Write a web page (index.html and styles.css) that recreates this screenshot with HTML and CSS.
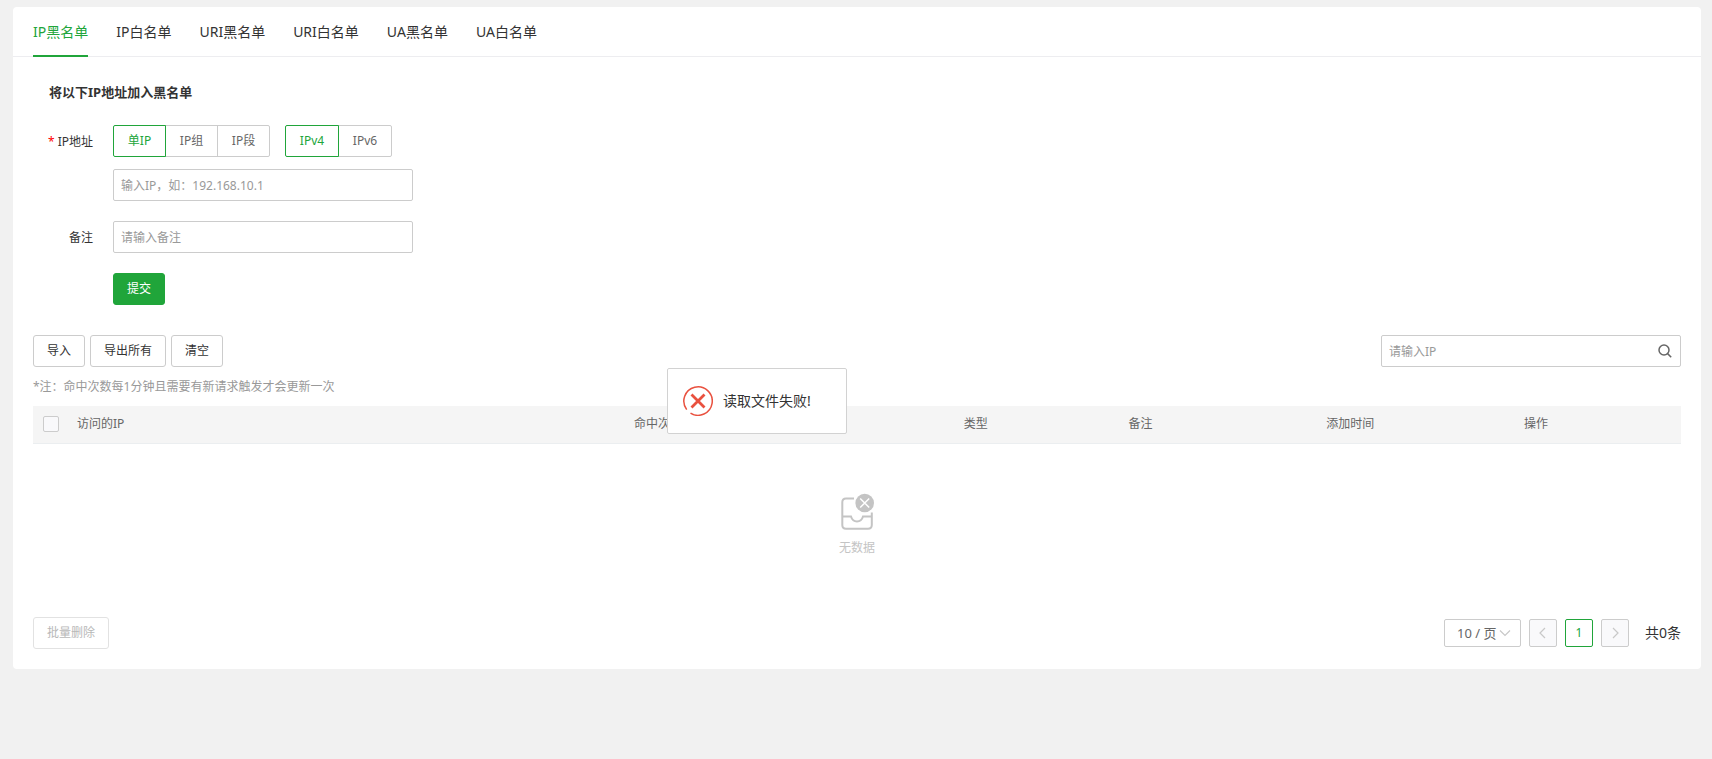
FILE: index.html
```html
<!DOCTYPE html>
<html lang="zh-CN">
<head>
	<meta charset="UTF-8">
	<meta name="viewport" content="width=device-width, initial-scale=1">
	<title>黑白名单</title>
	<link rel="stylesheet" href="styles.css">
</head>
<body>
<div class="card">
	<nav class="tabs">
		<a class="tab on" href="#">IP黑名单</a>
		<a class="tab" href="#">IP白名单</a>
		<a class="tab" href="#">URI黑名单</a>
		<a class="tab" href="#">URI白名单</a>
		<a class="tab" href="#">UA黑名单</a>
		<a class="tab" href="#">UA白名单</a>
	</nav>
	<div class="content">
		<form class="form">
			<h2 class="form-title">将以下IP地址加入黑名单</h2>
			<div class="form-item">
				<label class="form-label" for="ip"><span class="required">*</span> IP地址</label>
				<div class="form-main">
					<div class="radios">
						<div class="radio-group">
							<label class="radio"><input type="radio" name="ipType" checked><span>单IP</span></label>
							<label class="radio"><input type="radio" name="ipType"><span>IP组</span></label>
							<label class="radio"><input type="radio" name="ipType"><span>IP段</span></label>
						</div>
						<div class="radio-group ver">
							<label class="radio"><input type="radio" name="ipVer" checked><span>IPv4</span></label>
							<label class="radio"><input type="radio" name="ipVer"><span>IPv6</span></label>
						</div>
					</div>
					<input class="input" id="ip" type="text" placeholder="输入IP，如：192.168.10.1">
				</div>
			</div>
			<div class="form-item">
				<label class="form-label" for="remark">备注</label>
				<div class="form-main">
					<input class="input" id="remark" type="text" placeholder="请输入备注">
				</div>
			</div>
			<div class="form-submit">
				<button class="btn btn-primary" type="button">提交</button>
			</div>
		</form>

		<div class="toolbar">
			<div class="btns">
				<button class="btn" type="button">导入</button>
				<button class="btn" type="button">导出所有</button>
				<button class="btn" type="button">清空</button>
			</div>
			<div class="search">
				<input class="input" type="text" placeholder="请输入IP" aria-label="请输入IP">
				<button class="search-btn" type="button" aria-label="搜索">
					<svg width="14" height="14" viewBox="0 0 14 14" fill="none" stroke="#666" stroke-width="1.5">
						<circle cx="6" cy="6" r="5"/>
						<path d="M9.6 9.6L13.2 13.2"/>
					</svg>
				</button>
			</div>
		</div>
		<p class="note">*注：命中次数每1分钟且需要有新请求触发才会更新一次</p>

		<table class="table">
			<colgroup>
				<col class="col-check">
				<col class="col-ip">
				<col class="col-hit">
				<col class="col-type">
				<col class="col-remark">
				<col class="col-time">
				<col class="col-action">
			</colgroup>
			<thead>
				<tr>
					<th><input class="check" type="checkbox" aria-label="全选"></th>
					<th>访问的IP</th>
					<th>命中次数</th>
					<th>类型</th>
					<th>备注</th>
					<th>添加时间</th>
					<th>操作</th>
				</tr>
			</thead>
			<tbody>
				<tr>
					<td colspan="7">
						<div class="empty">
							<svg width="34" height="38" viewBox="0 0 34 38" fill="none" stroke="#c4c4c4" stroke-width="2">
								<path d="M14 5.5H6Q2.3 5.5 2.3 9.2V32Q2.3 35.7 6 35.7H28Q31.8 35.7 31.8 32V19.5"/>
								<path d="M2.3 23.5H11Q12.5 28.5 17 28.5T23 23.5H31.8"/>
								<circle cx="24.7" cy="10" r="9.3" fill="#c4c4c4" stroke="none"/>
								<path d="M20.2 5.5L29.2 14.5M29.2 5.5L20.2 14.5" stroke="#fff" stroke-width="1.5"/>
							</svg>
							<p>无数据</p>
						</div>
					</td>
				</tr>
			</tbody>
		</table>

		<div class="footer">
			<button class="btn" type="button" disabled>批量删除</button>
			<div class="pager">
				<div class="page-size">
					<select aria-label="每页条数">
						<option>10 / 页</option>
						<option>20 / 页</option>
						<option>50 / 页</option>
					</select>
					<svg width="12" height="8" viewBox="0 0 12 8" fill="none" stroke="#c8c8c8" stroke-width="1.2"><path d="M1 1.5L6 6.5L11 1.5"/></svg>
				</div>
				<button class="page" type="button" disabled aria-label="上一页">
					<svg width="8" height="12" viewBox="0 0 8 12" fill="none" stroke="#c8c8c8" stroke-width="1.2"><path d="M6 1L1 6L6 11"/></svg>
				</button>
				<button class="page on" type="button">1</button>
				<button class="page" type="button" disabled aria-label="下一页">
					<svg width="8" height="12" viewBox="0 0 8 12" fill="none" stroke="#c8c8c8" stroke-width="1.2"><path d="M2 1L7 6L2 11"/></svg>
				</button>
				<span class="total">共0条</span>
			</div>
		</div>
	</div>
</div>

<div class="toast" role="alert">
	<svg width="30" height="30" viewBox="0 0 30 30" fill="none" stroke="#e9513f">
		<path d="M7.5 27.1A14.2 14.2 0 1 0 3.7 23.6" stroke-width="1.5"/>
		<path d="M8.5 8.5L21.5 21.5M21.5 8.5L8.5 21.5" stroke-width="2.8"/>
	</svg>
	<span>读取文件失败!</span>
</div>
</body>
</html>
```
FILE: styles.css
```css
*{
	margin: 0;
	padding: 0;
	box-sizing: border-box;
}
body{
	background: #f1f1f1;
	padding: 7px 11px 20px 13px;
	color: #333;
	font: 12px/20px "Noto Sans", "Noto Sans CJK SC", sans-serif;
}
input, button, select{
	font: inherit;
	color: inherit;
}
.card{
	background: #fff;
	border-radius: 4px;
}

/* 顶部标签 */
.tabs{
	display: flex;
	gap: 28px;
	height: 50px;
	padding: 0 20px;
	border-bottom: 1px solid #ededf0;
}
.tab{
	height: 50px;
	line-height: 50px;
	font-size: 14px;
	color: #333;
	text-decoration: none;
	white-space: nowrap;
}
.tab.on{
	color: #20a53a;
	border-bottom: 2px solid #20a53a;
}
.content{
	padding: 25px 20px 20px;
}

/* 添加表单 */
.form-title{
	padding-left: 16px;
	margin-bottom: 23px;
	font-size: 13px;
	line-height: 20px;
}
.form-item{
	display: flex;
	margin-bottom: 20px;
}
.form-label{
	width: 80px;
	height: 32px;
	padding-right: 20px;
	line-height: 34px;
	text-align: right;
}
.required{
	color: #f00;
}
.radios{
	display: flex;
	gap: 15px;
	margin-bottom: 12px;
}
.radio-group{
	display: flex;
}
.radio{
	position: relative;
	margin-right: -1px;
	cursor: pointer;
}
.radio:last-child{
	margin-right: 0;
}
.radio input{
	position: absolute;
	opacity: 0;
}
.radio span{
	display: block;
	width: 53px;
	height: 32px;
	border: 1px solid #ccc;
	line-height: 30px;
	text-align: center;
	color: #666;
}
.ver .radio span{
	width: 54px;
}
.radio:first-child span{
	border-radius: 2px 0 0 2px;
}
.radio:last-child span{
	border-radius: 0 2px 2px 0;
}
.radio input:checked + span{
	position: relative;
	z-index: 1;
	color: #20a53a;
	border-color: #20a53a;
}
.input{
	display: block;
	width: 300px;
	height: 32px;
	padding: 0 7px;
	border: 1px solid #ccc;
	border-radius: 2px;
	background: #fff;
}
.input::placeholder{
	color: #999;
}
.form-submit{
	padding-left: 80px;
}
.btn{
	height: 32px;
	padding: 0 13px;
	border: 1px solid #ccc;
	border-radius: 3px;
	background: #fff;
	cursor: pointer;
}
.btn:disabled{
	color: #b8b8b8;
	border-color: #e2e2e2;
}
.btn-primary{
	background: #20a53a;
	border-color: #20a53a;
	color: #fff;
}

/* 列表 */
.toolbar{
	display: flex;
	justify-content: space-between;
	margin-top: 30px;
}
.btns{
	display: flex;
	gap: 5px;
}
.search{
	position: relative;
}
.search-btn{
	position: absolute;
	top: 0;
	right: 0;
	display: flex;
	align-items: center;
	justify-content: center;
	width: 32px;
	height: 32px;
	border: none;
	background: none;
}
.note{
	margin: 10px 0 9px;
	color: #999;
}
.table{
	width: 100%;
	table-layout: fixed;
	border-collapse: collapse;
}
.col-check{
	width: 34px;
}
.col-hit{
	width: 20%;
}
.col-type{
	width: 10%;
}
.col-remark{
	width: 12%;
}
.col-time{
	width: 12%;
}
.col-action{
	width: 167px;
}
.table th{
	height: 37px;
	padding: 0 0 0 10px;
	background: #f5f5f5;
	border-bottom: 1px solid #ebeef0;
	color: #666;
	font-weight: normal;
	text-align: left;
}
.check{
	appearance: none;
	display: block;
	width: 16px;
	height: 16px;
	border: 1px solid #ccc;
	border-radius: 2px;
	background: #f9f9fb;
}
.empty{
	display: flex;
	flex-direction: column;
	align-items: center;
	gap: 7px;
	padding: 49px 0 59px;
	color: #c4c4c4;
}
.footer{
	display: flex;
	align-items: center;
	justify-content: space-between;
}
.pager{
	display: flex;
	align-items: center;
	gap: 8px;
}
.page-size{
	position: relative;
}
.page-size select{
	appearance: none;
	display: block;
	width: 77px;
	height: 28px;
	padding: 0 12px;
	border: 1px solid #ccc;
	border-radius: 2px;
	background: #fff;
	font-size: 13px;
	color: #666;
}
.page-size svg{
	position: absolute;
	top: 10px;
	right: 10px;
	pointer-events: none;
}
.page{
	display: flex;
	align-items: center;
	justify-content: center;
	width: 28px;
	height: 28px;
	border: 1px solid #ccc;
	border-radius: 2px;
	background: #f9f9fb;
}
.page.on{
	background: #fff;
	border-color: #20a53a;
	color: #20a53a;
}
.total{
	padding-left: 8px;
	font-size: 14px;
}

/* 提示 */
.toast{
	position: fixed;
	top: 368px;
	left: 50%;
	display: flex;
	align-items: center;
	gap: 10px;
	width: 180px;
	height: 66px;
	margin-left: -189px;
	padding: 0 15px;
	border: 1px solid #d2d2d2;
	border-radius: 2px;
	background: #fff;
	font-size: 14px;
	white-space: nowrap;
	z-index: 10;
}
```
